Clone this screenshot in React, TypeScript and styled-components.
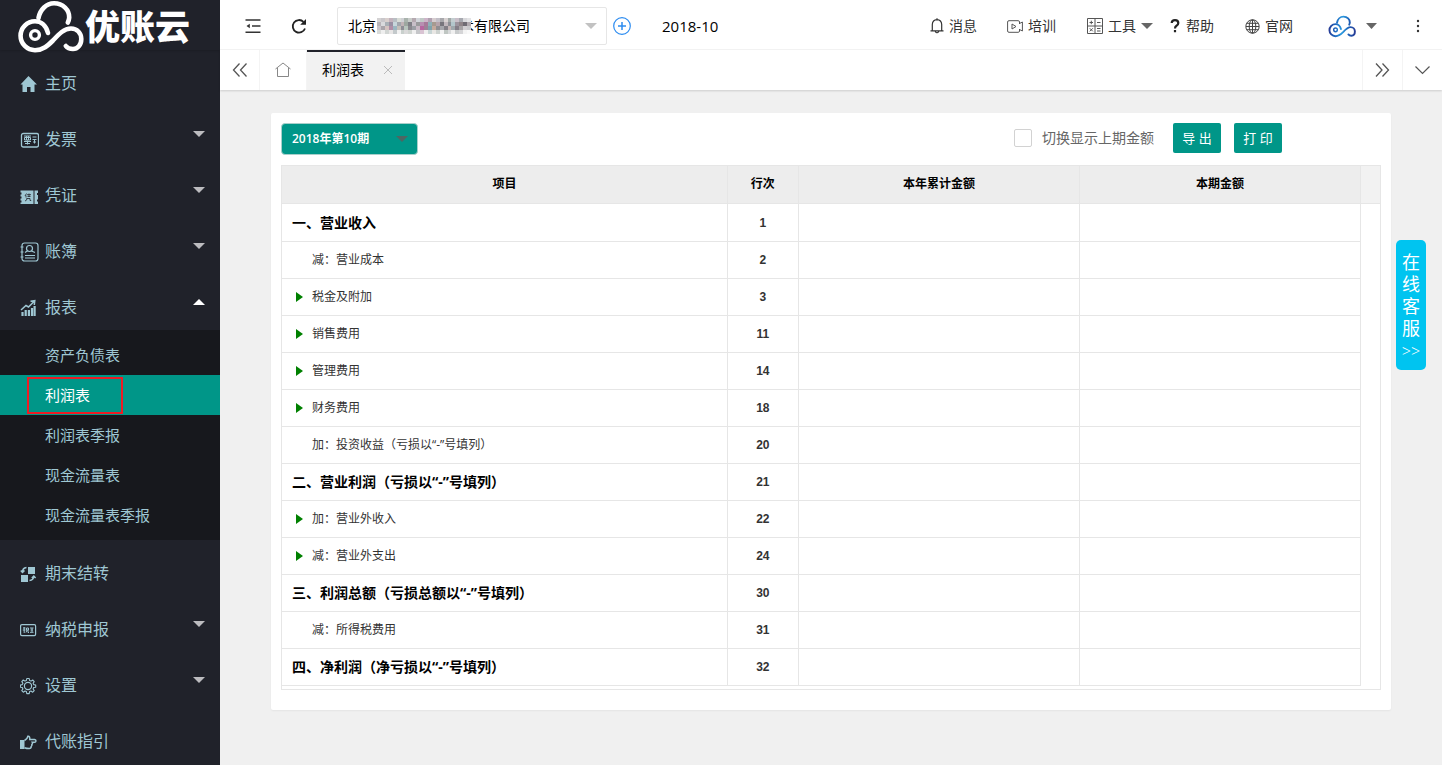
import React from 'react';
import styled, { createGlobalStyle, css } from 'styled-components';

const GlobalStyle = createGlobalStyle`
  *, *::before, *::after { box-sizing: border-box; }
  body {
    margin: 0;
    background: #f0f0f0;
    color: #333;
    font: 14px/20px "Open Sans", "Noto Sans CJK SC", sans-serif;
  }
  button, select, input { font: inherit; color: inherit; margin: 0; }
  button { border: 0; padding: 0; background: none; cursor: pointer; }
  a { color: inherit; text-decoration: none; }
  ul { list-style: none; margin: 0; padding: 0; }
  svg { display: block; flex: none; }
`;

const Layout = styled.div`
  display: flex;
  min-height: 100vh;
`;

/* ---------- Sidebar ---------- */

const Sidebar = styled.aside`
  flex: none;
  width: 220px;
  background: #20222a;
  color: #9fc7d3;
`;

const Brand = styled.a`
  display: flex;
  align-items: flex-start;
  height: 50px;
  padding-left: 17px;
  color: #fff;
  box-shadow: 0 1px 2px rgba(0, 0, 0, 0.15);
`;

const BrandName = styled.span`
  margin-left: 1px;
  font-size: 35px;
  line-height: 54px;
  font-weight: 900;
`;

const MenuButton = styled.button`
  display: flex;
  width: 100%;
  height: 56px;
  padding: 12px 15px 0 20px;
  font-size: 16px;
  line-height: 42px;
  text-align: left;
`;

const MenuIcon = styled.span`
  display: flex;
  align-items: center;
  width: 25px;
  height: 44px;
`;

const MenuLabel = styled.span`
  flex: 1;
`;

const Caret = styled.span<{ $up?: boolean; $color: string }>`
  flex: none;
  width: 0;
  height: 0;
  border: 6px solid transparent;
  ${(p) =>
    p.$up
      ? css`border-top: 0; border-bottom-color: ${p.$color};`
      : css`border-bottom: 0; border-top-color: ${p.$color};`}
`;

const MenuCaret = styled(Caret)`
  margin-top: 13px;
`;

const SubMenu = styled.ul`
  padding: 5px 0;
  background: #17181d;
`;

const SubLink = styled.a<{ $active?: boolean }>`
  display: flex;
  align-items: center;
  height: 40px;
  padding-left: 27px;
  font-size: 15px;
  ${(p) => p.$active && css`background: #009688; color: #fff;`}
`;

const SubLabel = styled.span<{ $marked?: boolean }>`
  display: flex;
  align-items: center;
  width: ${(p) => (p.$marked ? '96px' : 'auto')};
  height: 37px;
  padding-left: 16px;
  border: 2px solid ${(p) => (p.$marked ? '#ed1c24' : 'transparent')};
`;

/* ---------- Header ---------- */

const Main = styled.main`
  flex: 1;
  min-width: 0;
`;

const Header = styled.header`
  display: flex;
  align-items: center;
  height: 50px;
  padding: 3px 15px 0 24px;
  background: #fff;
  border-bottom: 1px solid #f4f4f4;
`;

const IconButton = styled.button<{ $gap?: number; $before?: number }>`
  display: flex;
  align-items: center;
  justify-content: center;
  min-width: 18px;
  height: 40px;
  margin-left: ${(p) => p.$before ?? 0}px;
  margin-right: ${(p) => p.$gap ?? 0}px;
`;

const SelectWrap = styled.div`
  position: relative;
  display: flex;
  align-items: center;
`;

const CompanySelect = styled.select`
  appearance: none;
  width: 270px;
  height: 38px;
  padding: 0 24px 0 10px;
  border: 1px solid #e6e6e6;
  border-radius: 2px;
  background: #fff;
  color: #000;
`;

const SelectCaret = styled(Caret)<{ $right: number }>`
  position: absolute;
  right: ${(p) => p.$right}px;
  pointer-events: none;
`;

const SelectMask = styled.svg`
  position: absolute;
  left: 40px;
`;

const Period = styled.span`
  flex: 1;
  font-size: 15px;
  color: #000;
`;

const HeaderLink = styled.a<{ $gap: number }>`
  display: flex;
  align-items: center;
  gap: 5px;
  margin-right: ${(p) => p.$gap}px;
  white-space: nowrap;
`;

const TabBar = styled.nav`
  display: flex;
  height: 40px;
  background: #fff;
  box-shadow: 0 1px 2px rgba(0, 0, 0, 0.15);
`;

const TabCell = styled.button<{ $wide?: boolean; $side?: 'left' | 'right' }>`
  display: flex;
  align-items: center;
  justify-content: center;
  width: ${(p) => (p.$wide ? 47 : 40)}px;
  ${(p) =>
    p.$side === 'left'
      ? css`border-left: 1px solid #f4f4f4;`
      : css`border-right: 1px solid #f4f4f4;`}
`;

const ActiveTab = styled.div`
  display: flex;
  align-items: center;
  gap: 19px;
  padding: 0 12px 2px 15px;
  margin-right: auto;
  border-top: 2px solid #20222a;
  background: #f2f2f2;
  color: #000;
`;

/* ---------- Report ---------- */

const Card = styled.section`
  margin: 23px 51px 54px;
  padding: 10px 10px 20px;
  border-radius: 2px;
  background: #fff;
  box-shadow: 0 1px 2px rgba(0, 0, 0, 0.05);
`;

const Toolbar = styled.div`
  display: flex;
  align-items: flex-start;
  height: 32px;
  margin-bottom: 10px;
  padding-right: 99px;
`;

const PeriodSelect = styled.select`
  appearance: none;
  width: 137px;
  height: 32px;
  padding: 0 24px 0 10px;
  border: 1px solid #a9cfcb;
  border-radius: 4px;
  background: #009688;
  color: #fff;
  font-size: 12px;
  font-weight: 600;
`;

const Toggle = styled.label`
  display: flex;
  align-items: center;
  gap: 10px;
  height: 30px;
  margin: 0 19px 0 auto;
  color: #666;
`;

const Checkbox = styled.input`
  appearance: none;
  width: 18px;
  height: 18px;
  border: 1px solid #d2d2d2;
  border-radius: 2px;
  background: #fff;
`;

const ActionButton = styled.button`
  width: 48px;
  height: 30px;
  border-radius: 2px;
  background: #009688;
  color: #fff;
  font-size: 13px;
  & + & { margin-left: 13px; }
`;

const Table = styled.table`
  width: 100%;
  table-layout: fixed;
  border-collapse: separate;
  border-spacing: 0;
  border: 1px solid #e6e6e6;
  padding-bottom: 3px;
`;

const Col = styled.col<{ $w?: string }>`
  width: ${(p) => p.$w ?? 'auto'};
`;

const Th = styled.th`
  height: 38px;
  padding: 0 10px 2px;
  border-right: 1px solid #e6e6e6;
  border-bottom: 1px solid #e6e6e6;
  background: #ededed;
  color: #000;
  font-size: 12px;
  font-weight: 700;
  &:last-child { border-right: 0; background: #f2f2f2; }
`;

const Row = styled.tr`
  height: 37px;
  &:first-child { height: 38px; }
`;

const Td = styled.td<{ $center?: boolean }>`
  padding: 0 10px;
  border-right: 1px solid #e6e6e6;
  border-bottom: 1px solid #e6e6e6;
  font-size: 12px;
  ${(p) =>
    p.$center &&
    css`
      text-align: center;
      font-family: "Liberation Sans", sans-serif;
      font-weight: 700;
    `}
  &:last-child { border: 0; padding: 0; }
`;

const ItemName = styled.span<{ $section?: boolean }>`
  display: flex;
  align-items: center;
  ${(p) => p.$section && css`font-size: 14px; font-weight: 700; color: #000;`}
`;

const Indent = styled.span`
  width: 20px;
  padding-left: 4px;
`;

const Expand = styled.span`
  display: block;
  width: 0;
  border: 5px solid transparent;
  border-right: 0;
  border-left: 7px solid green;
`;

const ChatTab = styled.button`
  position: fixed;
  top: 240px;
  right: 16px;
  display: flex;
  flex-direction: column;
  align-items: center;
  width: 30px;
  height: 130px;
  padding-top: 11px;
  border-radius: 5px;
  background: #00c4f0;
  color: #fff;
  font-size: 18px;
  line-height: 22px;
`;

const ChatLabel = styled.span`
  width: 18px;
  word-break: break-all;
`;

const ChatArrows = styled.span`
  font: 300 16px/24px "Open Sans", sans-serif;
  white-space: nowrap;
`;

/* ---------- Drawings ---------- */

function CloudLogo({ width, height, gradient }: { width: number; height: number; gradient?: boolean }) {
  const stroke = gradient ? 'url(#cloud)' : '#fff';
  return (
    <svg width={width} height={height} viewBox="18 0 67 54" fill="none" stroke={stroke} strokeWidth="4.6" strokeLinecap="round">
      <defs>
        <linearGradient id="cloud" gradientUnits="userSpaceOnUse" x1="20" y1="30" x2="84" y2="34">
          <stop offset="0" stopColor="#273a94" />
          <stop offset="0.2" stopColor="#1f5fb8" />
          <stop offset="0.5" stopColor="#2a9be0" />
          <stop offset="0.75" stopColor="#1d5db5" />
          <stop offset="1" stopColor="#273a94" />
        </linearGradient>
      </defs>
      <path d="M39.500 18C41 9.500 47.500 3.300 55 3.300C64 3.300 70.500 10 70.200 17.500Q70 20.500 68.800 22.500" />
      <path d="M49 33C47 25.500 42 21.300 36 21.300A14.400 14.400 0 0 0 36 50.200C44 50.200 49 45.500 54 40.500C60 34 65 28.500 72 28.500C78 28.500 82.300 33 82.300 39C82.300 45 78.500 49 74 49Q69 49 66.800 46" />
      <circle cx="36" cy="35" r="4.400" strokeWidth="3.400" />
    </svg>
  );
}

const S = (p: React.SVGProps<SVGSVGElement>) => (
  <svg width="18" height="18" viewBox="0 0 18 18" fill="none" stroke="currentColor" strokeWidth="1.2" {...p} />
);

const HomeSolid = () => (
  <S fill="currentColor" stroke="none"><path d="M8.500 1L17 9.500H14.500V17H10.500V12H7V17H2.500V9.500H0.500Z" /></S>
);
const InvoiceIcon = () => (
  <S width="19">
    <rect x="1" y="2.500" width="17" height="13.500" rx="1.800" strokeWidth="1.300" />
    <path d="M3.500 5H10.500M4 6.500H10V9H4ZM3.500 10.500H10.500M7 9.500V13.500M4.500 12.500H9.500M6 5V9M8 5V9M12 6H16M12 8.500H16M12.500 11H15.500M14 9V12.500" strokeWidth="1" />
  </S>
);
const VoucherIcon = () => (
  <S stroke="none" fill="currentColor">
    <path d="M0.500 3.500H13.500V17H0.500V15.500H1.500V13.500H0.500V11.500H1.500V9.500H0.500V7.500H1.500V5.500H0.500ZM14.500 3.500H18V6H17V8H18V12.500H17V14.500H18V17H14.500Z" />
    <path d="M6.500 6.500L5 9M6 8.500V10.500M7 7.700H11M9 6.500V9.500M7.500 9.500H10.500M6.500 11.500H10V13.500H11.200M7 11.500Q7 13.500 5 14" stroke="#20222a" strokeWidth="0.800" fill="none" />
  </S>
);
const BookIcon = () => (
  <S width="19" height="20" viewBox="0 0 19 20">
    <rect x="2" y="1" width="16" height="18" rx="2.500" />
    <path d="M0.500 5H3.500M0.500 10H3.500M0.500 15H3.500M5 13.500H15M5 16H15M5 10.500L8 8.500M11.500 9L15 10.500" />
    <circle cx="9.500" cy="6.500" r="3" />
  </S>
);
const ReportIcon = () => (
  <S>
    <path d="M1 11L6 6.500L8.500 8L14 2.500M10.500 2.300L14.800 1.700L14.300 6" strokeWidth="1.500" />
    <path d="M2.500 17V13M5.700 17V11M8.900 17V11M12 17V9M14.600 17V7" strokeWidth="2.200" />
  </S>
);
const CarryIcon = () => (
  <S>
    <path d="M8 2H15V9H8ZM1 10H8V17H1Z" fill="currentColor" stroke="none" />
    <path d="M6.500 2.500Q2.500 3 2.500 7M0.800 5.500L2.500 7.500L4.500 5.500M9.500 15.500Q13.500 15 13.800 11.500M11.800 13L13.800 11L15.600 13" strokeWidth="1.500" />
  </S>
);
const TaxIcon = () => (
  <S>
    <rect x="0.600" y="3.600" width="15" height="11" rx="1.300" />
    <path d="M3 7H5.500M4.200 6V12M2.800 9H5.500M6.500 7H8.500V9H6.500ZM7 9L6 11.500M8 9V11.500H9M10 7H13.500M10.500 9H13M10 11.300H13.500M12 7V11" strokeWidth="1" />
  </S>
);
const GearIcon = () => (
  <S>
    <circle cx="8" cy="9" r="3.600" />
    <path d="M6.800 1.500H9.200L9.600 3.500L11 4.100L12.700 3L14.200 4.600L13.100 6.300L13.700 7.600L15.700 8V10.200L13.700 10.500L13.100 12L14.200 13.600L12.700 15.200L11 14L9.600 14.600L9.200 16.600H6.800L6.400 14.600L5 14L3.300 15.200L1.800 13.600L2.900 12L2.300 10.500L0.400 10.200V8L2.300 7.600L2.900 6.300L1.800 4.600L3.300 3L5 4.100L6.400 3.500Z" strokeLinejoin="round" strokeWidth="1.100" />
  </S>
);
const HandIcon = () => (
  <S>
    <path d="M0 7H4.500V16H0Z" fill="currentColor" stroke="none" />
    <path d="M4.500 7.500Q7.500 6 7.800 3.300Q10 2.700 9.800 6.500H14.500Q16 6.800 16 8Q15.800 9.300 14.500 9.300H12.300Q13 10.500 11.800 11.600Q12.200 12.800 11.200 13.500Q11.200 15.500 9.200 15.500Q6.500 15.500 4.500 14.700" strokeWidth="1.500" />
  </S>
);

const menuHead = [
  { label: '主页', icon: <HomeSolid /> },
  { label: '发票', icon: <InvoiceIcon />, caret: true },
  { label: '凭证', icon: <VoucherIcon />, caret: true },
  { label: '账簿', icon: <BookIcon />, caret: true },
  { label: '报表', icon: <ReportIcon />, caret: true, open: true },
];
const subMenu = ['资产负债表', '利润表', '利润表季报', '现金流量表', '现金流量表季报'];
const menuTail = [
  { label: '期末结转', icon: <CarryIcon /> },
  { label: '纳税申报', icon: <TaxIcon />, caret: true },
  { label: '设置', icon: <GearIcon />, caret: true },
  { label: '代账指引', icon: <HandIcon /> },
];

type MenuEntry = { label: string; icon: React.ReactNode; caret?: boolean; open?: boolean };

function MenuItem({ item, children }: { item: MenuEntry; children?: React.ReactNode }) {
  return (
    <li>
      <MenuButton type="button">
        <MenuIcon>{item.icon}</MenuIcon>
        <MenuLabel>{item.label}</MenuLabel>
        {item.caret && <MenuCaret $up={item.open} $color={item.open ? '#fff' : '#bcbcbf'} />}
      </MenuButton>
      {children}
    </li>
  );
}

const maskRows = [
  ['d4d2d3', 'c9c7cb', 'd9cfcd', 'c3b3bd', 'b9bfc4', 'd8dcd6', 'cfd0d4', 'a9b3ad', 'c8ccc9', 'b5a9b0', 'd2d5da', 'c0c9c6', 'cdb5c9', 'b0a0b0', 'd6cdd0', 'c2bfc7', 'a8a8ac', 'd8d2d2', 'a2a9a7', 'c3cdd0', 'c9bfc9', 'a7a9b0', 'd9d9dc', 'e4e4e6'],
  ['b7b3b8', 'd9dadd', 'a9b0b6', '9a8fa3', 'c7d6db', 'a2a6ad', 'c1b4b7', '9da7a0', '7f7f86', 'c8bfc8', '9a9a9c', 'b78fb1', 'a77a99', '8fb0b8', 'a69a90', 'b5a4ab', '77757c', 'c0b7bc', '8c8f95', 'b3c6cc', '9c949e', '8f8488', '6f6b73', 'b0a9ae'],
  ['c8c4ca', 'a9a5ab', 'd4c3c0', 'b08fa8', '9bb6c1', 'c4bfb9', '8f8e96', 'b8c5bd', '8b898f', '9c9fa5', 'c8b9c4', 'b766a0', '9d8296', '7ea2ab', 'c3a99c', '8f8e92', 'a5a6ab', '827f86', 'c5b6b6', '9fa8ad', '847e88', 'a6a3a5', 'd2cfd2', 'c9c9cc'],
  ['d9dbd9', 'efefef', 'd2d6d4', 'e8e6e6', 'c3c9cb', 'f2f2f2', 'c9d0cd', 'dadada', 'cfd4d0', 'efefef', 'c5c6c9', 'd9c3d3', 'efefef', 'c7d5d5', 'e9e7e4', 'cdd2cf', 'f2f2f2', 'bfc6c2', 'd8dadb', 'f0f0f0', 'c8cbcc', 'd5d5d7', 'f4f4f4', 'fafafa'],
];

const rows: { name: string; line: number; kind: 'section' | 'plain' | 'expand' }[] = [
  { name: '一、营业收入', line: 1, kind: 'section' },
  { name: '减：营业成本', line: 2, kind: 'plain' },
  { name: '税金及附加', line: 3, kind: 'expand' },
  { name: '销售费用', line: 11, kind: 'expand' },
  { name: '管理费用', line: 14, kind: 'expand' },
  { name: '财务费用', line: 18, kind: 'expand' },
  { name: '加：投资收益（亏损以“-”号填列）', line: 20, kind: 'plain' },
  { name: '二、营业利润（亏损以“-”号填列）', line: 21, kind: 'section' },
  { name: '加：营业外收入', line: 22, kind: 'expand' },
  { name: '减：营业外支出', line: 24, kind: 'expand' },
  { name: '三、利润总额（亏损总额以“-”号填列）', line: 30, kind: 'section' },
  { name: '减：所得税费用', line: 31, kind: 'plain' },
  { name: '四、净利润（净亏损以“-”号填列）', line: 32, kind: 'section' },
];

export default function App() {
  return (
    <>
      <GlobalStyle />
      <Layout lang="zh-CN">
        <Sidebar>
          <Brand href="#">
            <CloudLogo width={67} height={54} />
            <BrandName>优账云</BrandName>
          </Brand>
          <ul>
            {menuHead.map((m) => (
              <MenuItem key={m.label} item={m}>
                {m.open && (
                  <SubMenu>
                    {subMenu.map((s) => (
                      <li key={s}>
                        <SubLink href="#" $active={s === '利润表'}>
                          <SubLabel $marked={s === '利润表'}>{s}</SubLabel>
                        </SubLink>
                      </li>
                    ))}
                  </SubMenu>
                )}
              </MenuItem>
            ))}
            {menuTail.map((m) => <MenuItem key={m.label} item={m} />)}
          </ul>
        </Sidebar>

        <Main>
          <Header>
            <IconButton type="button" aria-label="收起菜单" $gap={28}>
              <S stroke="#333" strokeWidth="1.500"><path d="M1.500 3H16.500M8 9H16.500M1.500 15.300H16.500" /><path d="M5.800 6.800V11.200L2.500 9Z" fill="#333" stroke="none" /></S>
            </IconButton>
            <IconButton type="button" aria-label="刷新" $gap={29}>
              <S stroke="#222" strokeWidth="1.800"><path d="M15 11.500A6.300 6.300 0 1 1 13.500 4.800" /><path d="M16 2V7.800H10.200Z" fill="#222" stroke="none" /></S>
            </IconButton>
            <SelectWrap>
              <CompanySelect aria-label="公司">
                <option>北京　　　　　　术有限公司</option>
              </CompanySelect>
              <SelectMask width="94" height="16" viewBox="0 0 24 4" preserveAspectRatio="none" shapeRendering="crispEdges">
                {maskRows.map((r, y) => r.map((c, x) => <rect key={`${x}-${y}`} x={x} y={y} width="1" height="1" fill={`#${c}`} />))}
              </SelectMask>
              <SelectCaret $color="#c2c2c2" $right={10} />
            </SelectWrap>
            <IconButton type="button" aria-label="添加公司" $before={6} $gap={31}>
              <S stroke="#2d8cf0"><circle cx="9" cy="9" r="8.300" /><path d="M9 5V13M5 9H13" strokeWidth="1.500" /></S>
            </IconButton>
            <Period>2018-10</Period>
            <HeaderLink href="#" $gap={30}>
              <S width="14" height="16" viewBox="0 0 14 16" stroke="#333"><path d="M0.500 12.800H13.500M2.300 12.500V6.500Q2.500 1.800 7 1.600Q11.500 1.800 11.700 6.500V12.500M7 0.300V1.600M5.200 13.500Q7 16 8.800 13.500" /></S>
              消息
            </HeaderLink>
            <HeaderLink href="#" $gap={31}>
              <S width="16" height="13" viewBox="0 0 16 13" stroke="#555" strokeWidth="1"><path d="M12.500 4V2Q12.500 0.700 11.200 0.700H2Q0.600 0.700 0.600 2V11Q0.600 12.300 2 12.300H11.200Q12.500 12.300 12.500 11V9M12.500 3.500L15.400 2V11L12.500 9.500M5 4L9 6.500L5 9Z" /></S>
              培训
            </HeaderLink>
            <HeaderLink href="#" $gap={17}>
              <S width="16" height="16" viewBox="0 0 16 16" stroke="#555" strokeWidth="1"><path d="M0.500 0.500H15.500V15.500H0.500ZM8 0.500V15.500M0.500 8H15.500M2.500 4.500H6M4.300 2.700V6.200M10 4.500H13.500M2.800 10.300L5.800 13.300M5.800 10.300L2.800 13.300M10 10.500H13.500M10 13H13.500" /></S>
              工具
              <Caret $color="#666" />
            </HeaderLink>
            <HeaderLink href="#" $gap={31}>
              <S width="11" height="16" viewBox="0 0 11 16" stroke="#222" strokeWidth="2.200"><path d="M1.700 5Q1.800 2.200 5 2.200Q8.300 2.200 8.300 5Q8.300 6.700 6.500 7.700Q5 8.500 5 10.500M5 12V14.300" /></S>
              帮助
            </HeaderLink>
            <HeaderLink href="#" $gap={35}>
              <S width="15" height="15" viewBox="0 0 15 15" stroke="#444" strokeWidth="1"><circle cx="7.500" cy="7.500" r="6.700" /><ellipse cx="7.500" cy="7.500" rx="3.300" ry="6.700" /><path d="M7.500 1V14M1 7.500H14M1.800 4.300H13.200M1.800 10.700H13.200" /></S>
              官网
            </HeaderLink>
            <HeaderLink href="#" $gap={32} aria-label="账户">
              <CloudLogo width={28} height={23} gradient />
              <S width="16" height="6" viewBox="0 0 16 6" stroke="none"><path d="M5 0H16L10.500 6Z" fill="#666" /></S>
            </HeaderLink>
            <IconButton type="button" aria-label="更多">
              <S width="4" height="16" viewBox="0 0 4 16" stroke="none" fill="#333"><circle cx="2" cy="3" r="1.200" /><circle cx="2" cy="8" r="1.200" /><circle cx="2" cy="13" r="1.200" /></S>
            </IconButton>
          </Header>

          <TabBar>
            <TabCell type="button" aria-label="向左"><S stroke="#555" strokeWidth="1.300"><path d="M8.500 2.500L2.500 9L8.500 15.500M15.500 2.500L9.500 9L15.500 15.500" /></S></TabCell>
            <TabCell type="button" aria-label="首页" $wide><S stroke="#888" strokeWidth="1"><path d="M1.500 8L9 2L16.500 8M3.500 7V15.500H14.500V7" /></S></TabCell>
            <ActiveTab>
              利润表
              <button type="button" aria-label="关闭"><S width="10" height="10" viewBox="0 0 10 10" stroke="#bbb" strokeWidth="1"><path d="M1 1L9 9M9 1L1 9" /></S></button>
            </ActiveTab>
            <TabCell type="button" aria-label="向右" $side="left"><S stroke="#555" strokeWidth="1.300"><path d="M2 2.500L8 9L2 15.500M8.500 2.500L14.500 9L8.500 15.500" /></S></TabCell>
            <TabCell type="button" aria-label="展开" $side="left"><S stroke="#555" strokeWidth="1.200"><path d="M1.500 5.500L8.500 12.500L15.500 5.500" /></S></TabCell>
          </TabBar>

          <Card>
            <Toolbar>
              <SelectWrap>
                <PeriodSelect aria-label="会计期间"><option>2018年第10期</option></PeriodSelect>
                <SelectCaret $color="#4c6663" $right={10} />
              </SelectWrap>
              <Toggle><Checkbox type="checkbox" />切换显示上期金额</Toggle>
              <ActionButton type="button">导 出</ActionButton>
              <ActionButton type="button">打 印</ActionButton>
            </Toolbar>
            <Table>
              <colgroup>
                <Col /><Col $w="71px" /><Col $w="25.6%" /><Col $w="25.6%" /><Col $w="19px" />
              </colgroup>
              <thead>
                <tr><Th>项目</Th><Th>行次</Th><Th>本年累计金额</Th><Th>本期金额</Th><Th /></tr>
              </thead>
              <tbody>
                {rows.map((r) => (
                  <Row key={r.line}>
                    <Td>
                      <ItemName $section={r.kind === 'section'}>
                        {r.kind !== 'section' && <Indent>{r.kind === 'expand' && <Expand />}</Indent>}
                        {r.name}
                      </ItemName>
                    </Td>
                    <Td $center>{r.line}</Td>
                    <Td /><Td /><Td />
                  </Row>
                ))}
              </tbody>
            </Table>
          </Card>
        </Main>
      </Layout>
      <ChatTab type="button">
        <ChatLabel>在线客服</ChatLabel>
        <ChatArrows>&gt;&gt;</ChatArrows>
      </ChatTab>
    </>
  );
}
